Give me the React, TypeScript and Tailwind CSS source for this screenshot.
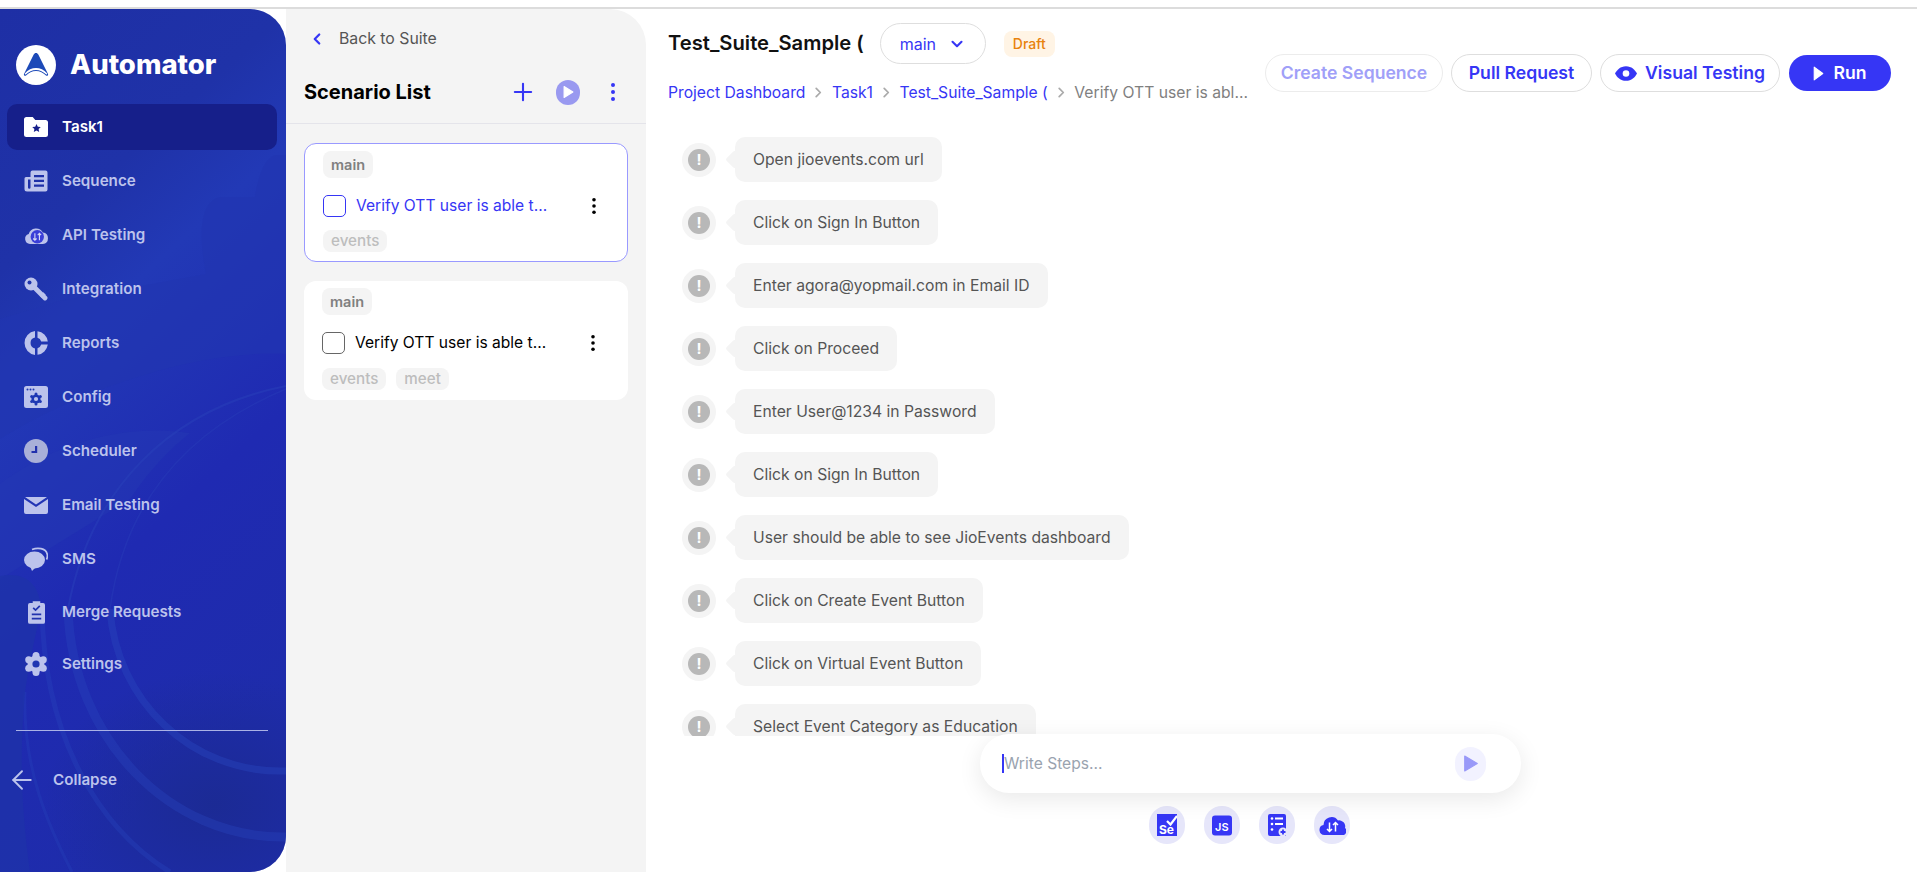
import React from "react";
import { ChevronDown, ChevronLeft, ChevronRight, Plus, ArrowLeft } from "lucide-react";

type IconProps = { className?: string };
const c = "currentColor";

const FolderStar = () => (
  <svg viewBox="0 0 24 20" className="w-6 h-5"><path fill="#fff" d="M2.500 0h6.200l2.600 3H21.500A2.500 2.500 0 0 1 24 5.500V17.500A2.500 2.500 0 0 1 21.500 20H2.500A2.500 2.500 0 0 1 0 17.500V2.500A2.500 2.500 0 0 1 2.500 0z" /><path fill="#161f8a" d="M12.500 7l1.300 2.700 3 .4-2.200 2 .6 3-2.700-1.500-2.700 1.500.6-3-2.200-2 3-.4z" /></svg>
);
const Seq = () => (
  <svg viewBox="0 0 24 24" className="w-6 h-6"><path fill={c} d="M8.500 1.500h13A2 2 0 0 1 23.500 3.500V20.500A2 2 0 0 1 21.500 22.500H3A2.500 2.500 0 0 1 .5 20V9.500A1.500 1.500 0 0 1 2 8h4.500V3.500A2 2 0 0 1 8.500 1.500z" /><path fill="#1e30a8" d="M10 6h10v2.200H10zM10 10.800h10V13H10zM10 15.600h10v2.200H10zM4 10.500h2.500v8A1.250 1.250 0 0 1 4 18.500z" /></svg>
);
const CloudApi = () => (
  <svg viewBox="0 0 28 22" className="w-[27px] h-[21px]"><path fill={c} d="M7 21A6 6 0 0 1 5.500 9.300 9 9 0 0 1 22 7.500 6.800 6.800 0 0 1 22 21z" /><circle cx="15.500" cy="12.500" r="7.800" fill="#3a3ed8" /><path stroke="#d5d8f5" strokeWidth="1.300" fill="none" d="M12.700 8.500v8M10.700 14.500l2 2 2-2M18 16.500v-8M16 10.500l2-2 2 2" /></svg>
);
const Key = () => (
  <svg viewBox="0 0 24 24" className="w-6 h-6"><circle cx="7" cy="7" r="6.500" fill={c} /><path fill="none" stroke={c} strokeWidth="4.800" strokeLinecap="round" d="M10 10L21 21" /><path fill="none" stroke={c} strokeWidth="3.500" d="M17 20l3.500-3.500" /><circle cx="5.500" cy="5.500" r="2" fill="#1f34ac" /></svg>
);
const Pie = () => (
  <svg viewBox="0 0 24 24" className="w-6 h-6"><path fill={c} d="M11 .1v6.500A5.500 5.500 0 0 0 11 17.400v6.500A12 12 0 0 1 11 .1zM13.500 .2A12 12 0 0 1 23.800 10.500H17.200A5.500 5.500 0 0 0 13.500 6.800zM23.800 13.500A12 12 0 0 1 13.500 23.800V17.200A5.500 5.500 0 0 0 17.200 13.500z" /></svg>
);
const ConfigIc = () => (
  <svg viewBox="0 0 24 22" className="w-6 h-[22px]"><path fill={c} d="M2.500 0h19A2.500 2.500 0 0 1 24 2.500V19.500A2.500 2.500 0 0 1 21.500 22H2.500A2.500 2.500 0 0 1 0 19.500V2.500A2.500 2.500 0 0 1 2.500 0z" /><g fill="#1f38b4"><circle cx="3.500" cy="3.500" r="1" /><circle cx="6.500" cy="3.500" r="1" /><circle cx="9.500" cy="3.500" r="1" /><circle cx="12" cy="13" r="4.600" /><circle cx="12" cy="8" r="1.500" /><circle cx="12" cy="18" r="1.500" /><circle cx="7.700" cy="10.500" r="1.500" /><circle cx="16.300" cy="10.500" r="1.500" /><circle cx="7.700" cy="15.500" r="1.500" /><circle cx="16.300" cy="15.500" r="1.500" /></g><circle cx="12" cy="13" r="2.100" fill={c} /></svg>
);
const Clock = () => (
  <svg viewBox="0 0 24 24" className="w-6 h-6"><circle cx="12" cy="12" r="12" fill="#a9b0d8" /><path fill="#2231ad" d="M11 7h2.200v7H7.500v-2H11z" /></svg>
);
const Mail = () => (
  <svg viewBox="0 0 24 17" className="w-6 h-[17px]"><path fill={c} d="M1 0h22L12 7.500zM0 2l12 8 12-8v13a2 2 0 0 1-2 2H2a2 2 0 0 1-2-2z" /></svg>
);
const Sms = () => (
  <svg viewBox="0 0 24 24" className="w-6 h-6"><ellipse cx="10.500" cy="13" rx="10.500" ry="8.500" fill={c} /><path fill={c} d="M6 19h7l-5 5z" /><path fill="none" stroke={c} strokeWidth="1.700" d="M8 2.500C13 .5 22 .5 23.300 7.500c.3 2 0 3.500-.8 5" /></svg>
);
const Clip = () => (
  <svg viewBox="0 0 18 24" className="w-[17px] h-[23px]"><path fill={c} d="M2 2h3V0h8v2h3a2 2 0 0 1 2 2v18a2 2 0 0 1-2 2H2a2 2 0 0 1-2-2V4a2 2 0 0 1 2-2z" /><path fill="none" stroke="#2133ae" strokeWidth="1.800" d="M5.500 7l2.500 2.500 4.500-4.500" /><path fill="#2133ae" d="M4 13h10v2H4zM4 17.500h10v2H4z" /></svg>
);
const Gear = () => (
  <svg viewBox="0 0 24 24" className="w-6 h-6"><g fill={c}><circle cx="12" cy="12" r="8.500" /><circle cx="12" cy="3.600" r="3.500" /><circle cx="12" cy="20.400" r="3.500" /><circle cx="4.700" cy="7.800" r="3.500" /><circle cx="19.300" cy="7.800" r="3.500" /><circle cx="4.700" cy="16.200" r="3.500" /><circle cx="19.300" cy="16.200" r="3.500" /></g><circle cx="12" cy="12" r="3.600" fill="#2036b2" /></svg>
);

const Logo = () => (
  <svg viewBox="0 0 40 40" className="w-10 h-10 shrink-0">
    <circle cx="20" cy="20" r="20" fill="#fff" />
    <path fill="#1d4ab8" d="M20 8c1 0 1.800.6 2.300 1.600L32 29c.5 1.200-.6 2.300-1.700 1.700C27 28 24 26 20 26s-7 2-10.300 4.700C8.600 31.300 7.500 30.200 8 29l9.700-19.400C18.200 8.600 19 8 20 8z" />
    <path fill="#fff" d="M8.800 28.500C12 24.500 16 23 20 23s8 1.500 11.200 5.500l-.6 1.300C27 26.500 24 25 20 25s-7 1.500-10.600 4.800z" />
  </svg>
);

const navs: { label: string; icon: React.ReactNode; cls?: string; textCls?: string }[] = [
  { label: "Task1", icon: <FolderStar />, cls: "bg-[#161f8a] text-white" },
  { label: "Sequence", icon: <Seq /> },
  { label: "API Testing", icon: <CloudApi /> },
  { label: "Integration", icon: <Key /> },
  { label: "Reports", icon: <Pie /> },
  { label: "Config", icon: <ConfigIc /> },
  { label: "Scheduler", icon: <Clock /> },
  { label: "Email Testing", icon: <Mail /> },
  { label: "SMS", icon: <Sms /> },
  { label: "Merge Requests", icon: <Clip />, cls: "-mt-px", textCls: "-ml-[2px]" },
  { label: "Settings", icon: <Gear />, cls: "-mt-[2px]" },
];

const steps = [
  "Open jioevents.com url",
  "Click on Sign In Button",
  "Enter agora@yopmail.com in Email ID",
  "Click on Proceed",
  "Enter User@1234 in Password",
  "Click on Sign In Button",
  "User should be able to see JioEvents dashboard",
  "Click on Create Event Button",
  "Click on Virtual Event Button",
  "Select Event Category as Education",
];

const SidebarArt = () => (
  <svg className="absolute inset-0 w-full h-full pointer-events-none" viewBox="0 0 286 863" preserveAspectRatio="none">
    <defs>
      <linearGradient id="sbg" x1="0" y1="0" x2="0.3" y2="1">
        <stop offset="0" stopColor="#1e2fa5" />
        <stop offset="0.28" stopColor="#1f32a8" />
        <stop offset="0.42" stopColor="#2239b6" />
        <stop offset="0.7" stopColor="#1f2ab2" />
        <stop offset="1" stopColor="#1e2cab" />
      </linearGradient>
      <radialGradient id="sdark" cx="0.75" cy="0.7" r="0.6">
        <stop offset="0" stopColor="#1b2a92" stopOpacity="0.9" />
        <stop offset="1" stopColor="#1b2a92" stopOpacity="0" />
      </radialGradient>
    </defs>
    <rect width="286" height="863" fill="url(#sbg)" />
    <path fill="#2236b0" opacity="0.6" d="M286 146H275C262 150 257 175 255 188H220C200 192 198 225 206 265L60 292 0 310V430C80 380 200 340 286 345z" />
    <path fill="#2438b4" opacity="0.5" d="M0 475C60 430 130 415 190 424C170 440 150 460 130 490L0 570z" />
    <path fill="none" stroke="#2a43bb" strokeWidth="2" opacity="0.45" d="M286 377C170 400 90 480 68 600" />
    <path fill="none" stroke="#2a43bb" strokeWidth="1.500" opacity="0.35" d="M286 380C190 420 125 490 110 600" />
    <rect x="0" y="640" width="286" height="223" fill="url(#sdark)" />
    <path fill="none" stroke="#2744bc" strokeWidth="7" opacity="0.45" d="M110 600C116 690 190 765 286 762" />
    <path fill="none" stroke="#2744bc" strokeWidth="9" opacity="0.4" d="M68 600C72 730 170 830 286 828" />
    <path fill="none" stroke="#2744bc" strokeWidth="5" opacity="0.35" d="M42 600C44 730 100 820 170 863" />
    <path fill="none" stroke="#2744bc" strokeWidth="3" opacity="0.3" d="M25 683C22 760 50 820 72 863" />
    <path fill="#1e33a8" opacity="0.7" d="M0 567C25 562 40 575 41 600C36 625 30 650 25 683C20 740 20 790 30 863H0z" />
  </svg>
);

const Chip = ({ children, bold }: { children: React.ReactNode; bold?: boolean }) => (
  <span className={`inline-flex items-center justify-center rounded-lg bg-[#f4f4f4] px-2 ${bold ? "h-[27px] text-[14.5px] font-semibold text-[#808080]" : "h-[22px] text-[15.2px] font-medium text-[#bdbdbd]"}`}>
    {children}
  </span>
);

const Kebab = ({ className }: IconProps) => (
  <svg viewBox="0 0 6 20" className={className}><circle cx="3" cy="3" r="2" fill={c} /><circle cx="3" cy="10" r="2" fill={c} /><circle cx="3" cy="17" r="2" fill={c} /></svg>
);

const Card = ({ active, tags }: { active?: boolean; tags: string[] }) => (
  <div className={`h-[119px] rounded-xl bg-white flex flex-col pt-[7px] pl-[18px] ${active ? "border border-[#9999ff]" : ""}`}>
    <div><Chip bold>main</Chip></div>
    <div className="mt-[17px] flex items-center h-[22px]">
      <span className={`w-[23px] h-[22px] rounded-[5px] border-[1.5px] shrink-0 ${active ? "border-[#3636f5]" : "border-[#666]"}`} />
      <span className={`ml-[10px] text-[15.6px] w-[195px] whitespace-nowrap ${active ? "text-[#3636f5]" : "text-black"}`}>Verify OTT user is able t…</span>
      <Kebab className="ml-[40px] w-[6px] h-[18px] text-black" />
    </div>
    <div className={`flex gap-[10px] ${active ? "mt-[13px]" : "mt-[14px]"}`}>
      {tags.map((t) => <Chip key={t}>{t}</Chip>)}
    </div>
  </div>
);

const Tool = ({ children }: { children: React.ReactNode }) => (
  <div className="w-9 h-[38px] rounded-full bg-[#e6e6fa] flex items-center justify-center">{children}</div>
);

export default function App() {
  return (
    <div className="w-[1917px] h-[872px] overflow-hidden bg-white flex flex-col text-[#1a1a1a]" style={{ fontFamily: "Inter, 'Liberation Sans', sans-serif" }}>
      <div className="h-[9px] shrink-0 border-b-2 border-[#dcdcdc]" />
      <div className="flex-1 flex min-h-0">
        <aside className="relative w-[286px] shrink-0 rounded-r-[36px] overflow-hidden text-[#bcc3ec]">
          <SidebarArt />
          <div className="relative h-full flex flex-col">
            <div className="flex items-center pl-4 pt-[17px] gap-[14px] h-[95px]">
              <Logo />
              <span className="text-[27.5px] font-extrabold text-white">Automator</span>
            </div>
            <nav className="flex flex-col gap-2 pl-[7px] pr-[9px]">
              {navs.map((n) => (
                <div key={n.label} className={`h-[46px] flex items-center rounded-[10px] pl-[17px] ${n.cls ?? ""}`}>
                  <span className="w-6 flex items-center justify-center shrink-0">{n.icon}</span>
                  <span className={`ml-[14px] text-[15.2px] font-semibold ${n.textCls ?? ""}`}>{n.label}</span>
                </div>
              ))}
            </nav>
            <div className="mt-[43px] ml-4 mr-[18px] h-px bg-[#aab2e6]" />
            <div className="mt-[34px] flex items-center pl-[7px]">
              <ArrowLeft className="w-[30px] h-[30px]" strokeWidth={1.500} />
              <span className="ml-[16px] text-[15.2px] font-semibold">Collapse</span>
            </div>
          </div>
        </aside>

        <section className="w-[360px] shrink-0 bg-[#f4f4f4] rounded-tr-[36px] flex flex-col">
          <div className="h-[115px] px-[18px] flex flex-col shrink-0 border-b border-[#e4e4ea]">
            <div className="mt-5 flex items-center h-5">
              <ChevronLeft className="w-[18px] h-[18px] text-[#3636f5] ml-1" strokeWidth={3} />
              <span className="ml-[13px] text-[15.8px] text-[#555]">Back to Suite</span>
            </div>
            <div className="mt-[29px] flex items-center h-7">
              <span className="text-[20px] font-bold text-black">Scenario List</span>
              <Plus className="ml-auto mr-[19px] w-7 h-7 text-[#3636f5]" strokeWidth={1.800} />
              <span className="w-6 h-[25px] rounded-full bg-[#9999f0] flex items-center justify-center mr-[30px]">
                <svg viewBox="0 0 10 12" className="w-[11px] h-[14px]"><path fill="#fff" d="M1 1l8 5-8 5z" stroke="#fff" strokeLinejoin="round" /></svg>
              </span>
              <Kebab className="w-[6px] h-5 text-[#3636f5] mr-3" />
            </div>
          </div>
          <div className="px-[18px] pt-[19px] flex flex-col gap-[19px]">
            <Card active tags={["events"]} />
            <Card tags={["events", "meet"]} />
          </div>
        </section>

        <main className="flex-1 min-w-0 flex flex-col">
          <header className="h-[110px] shrink-0 flex justify-between pl-[22px] pr-[26px]">
            <div className="flex flex-col w-[580px]">
              <div className="flex items-center mt-[14px] h-[41px]">
                <span className="text-[20.2px] font-semibold text-[#111]">Test_Suite_Sample (</span>
                <div className="ml-4 w-[106px] h-[41px] rounded-full border border-[#dedede] flex items-center justify-center gap-[12px] text-[#3636f5] text-[16px]">
                  main <ChevronDown className="w-[18px] h-[18px]" strokeWidth={2.800} />
                </div>
                <span className="ml-[18px] h-[26px] w-[51px] rounded-lg bg-[#fff4e5] text-[#e8820c] text-[14px] font-medium flex items-center justify-center">Draft</span>
              </div>
              <div className="mt-[17px] flex items-center text-[15.7px] text-[#3636f5] whitespace-nowrap">
                <span>Project Dashboard</span>
                <ChevronRight className="mx-[5px] w-[17px] h-[17px] text-[#aaa]" strokeWidth={2.500} />
                <span>Task1</span>
                <ChevronRight className="mx-[5px] w-[17px] h-[17px] text-[#aaa]" strokeWidth={2.500} />
                <span>Test_Suite_Sample (</span>
                <ChevronRight className="mx-[5px] w-[17px] h-[17px] text-[#aaa]" strokeWidth={2.500} />
                <span className="text-[#808080]">Verify OTT user is abl...</span>
              </div>
            </div>
            <div className="flex items-start gap-2 pt-[45px] text-[17.6px] font-semibold">
              <button className="h-[38px] w-[178px] pt-px rounded-full border border-[#ececec] text-[#a0a0f8]">Create Sequence</button>
              <button className="h-[38px] w-[141px] pt-px rounded-full border border-[#dedede] text-[#3636f5]">Pull Request</button>
              <button className="h-[38px] w-[180px] pt-px rounded-full border border-[#dedede] text-[#3636f5] flex items-center justify-center gap-2">
                <svg viewBox="0 0 24 16" className="w-[22px] h-[15px]"><path fill="#3636f5" d="M12 0c6 0 10 4 12 8-2 4-6 8-12 8S2 12 0 8c2-4 6-8 12-8z" /><circle cx="12" cy="8" r="3.600" fill="#fff" /></svg>
                Visual Testing
              </button>
              <button className="h-9 mt-px ml-px w-[102px] pt-px rounded-full bg-[#3636f5] text-white flex items-center justify-center gap-[9px]">
                <svg viewBox="0 0 10 14" className="w-[11px] h-[15px]"><path fill="#fff" stroke="#fff" strokeLinejoin="round" d="M1 1l8 6-8 6z" /></svg>
                Run
              </button>
            </div>
          </header>

          <div className="h-[617px] shrink-0 overflow-hidden pl-[36px] pt-[18px] flex flex-col gap-[18px]">
            {steps.map((s, i) => (
              <div key={i} className="flex items-center shrink-0">
                <div className="w-[34px] h-[34px] rounded-full bg-[#f4f4f4] flex items-center justify-center shrink-0">
                  <span className="w-[22px] h-[22px] rounded-full bg-[#b8b8b8] text-white flex items-center justify-center text-[15px] font-bold leading-none">!</span>
                </div>
                <div className="ml-[19px] relative h-[45px] rounded-[10px] bg-[#f4f4f4] px-[18px] pt-px flex items-center text-[15.7px] text-[#555]">
                  <span className="absolute -left-[7px] top-[16px] w-[13px] h-[13px] rotate-45 bg-[#f4f4f4] rounded-[2px]" />
                  <span className="relative">{s}</span>
                </div>
              </div>
            ))}
          </div>

          <div className="h-0 relative z-10">
            <div className="ml-[333px] w-[541px] h-[59px] rounded-[29px] bg-white shadow-[0_6px_24px_rgba(0,0,0,0.09)] flex items-center pl-[22px] pr-[35px] absolute -top-[2px] left-px">
              <span className="w-[2px] h-[19px] bg-[#3636f5]" />
              <span className="text-[15.6px] text-[#9aa3af]">Write Steps...</span>
              <span className="ml-auto w-[31px] h-[34px] rounded-full bg-[#f2f2ff] flex items-center justify-center">
                <svg viewBox="0 0 14 16" className="w-[16px] h-[19px]"><path fill="#9999f8" stroke="#9999f8" strokeLinejoin="round" d="M1.500 1.500l11 6.500-11 6.500z" /></svg>
              </span>
            </div>
          </div>
          <div className="ml-[503px] mt-[70px] flex gap-[19px]">
            <Tool>
              <svg viewBox="0 0 20 22" className="w-[20px] h-[22px]"><path fill="#3636f5" d="M0 0h20v22H0z" /><path fill="none" stroke="#fff" strokeWidth="2.200" d="M10 7l3.500 3.500L20 2" /><text x="2" y="20" fontSize="12" fontWeight="700" fill="#fff" fontFamily="Inter, sans-serif">Se</text></svg>
            </Tool>
            <Tool>
              <svg viewBox="0 0 20 20" className="w-5 h-[21px]"><rect width="20" height="20" rx="3" fill="#3636f5" /><text x="3" y="15" fontSize="11" fontWeight="600" fill="#fff" fontFamily="Inter, sans-serif">JS</text></svg>
            </Tool>
            <Tool>
              <svg viewBox="0 0 18 22" className="w-[18px] h-[22px]"><path fill="#3636f5" d="M2 0h14a2 2 0 0 1 2 2v20H2a2 2 0 0 1-2-2V2a2 2 0 0 1 2-2z" /><g fill="#fff"><circle cx="4" cy="4.500" r="1.300" /><circle cx="4" cy="10" r="1.300" /><circle cx="4" cy="15.500" r="1.300" /><rect x="7" y="3.500" width="8" height="2" /><rect x="7" y="9" width="8" height="2" /></g><circle cx="15" cy="18" r="4.500" fill="#e6e6fa" /><path stroke="#3636f5" strokeWidth="1.800" d="M12.500 18h5M15 15.500v5" /></svg>
            </Tool>
            <Tool>
              <svg viewBox="0 0 26 20" className="w-[27px] h-[20px]"><path fill="#3636f5" d="M5 20A5 5 0 0 1 4 10.100 8 8 0 0 1 18.500 5.500 6 6 0 0 1 25.500 13 4 4 0 0 1 22 20z" /><path stroke="#fff" strokeWidth="1.500" fill="none" d="M10 7.500v9M7.500 14l2.500 2.500 2.500-2.500M16 16.500v-9M13.500 10l2.500-2.500 2.500 2.500" /></svg>
            </Tool>
          </div>
        </main>
      </div>
    </div>
  );
}
